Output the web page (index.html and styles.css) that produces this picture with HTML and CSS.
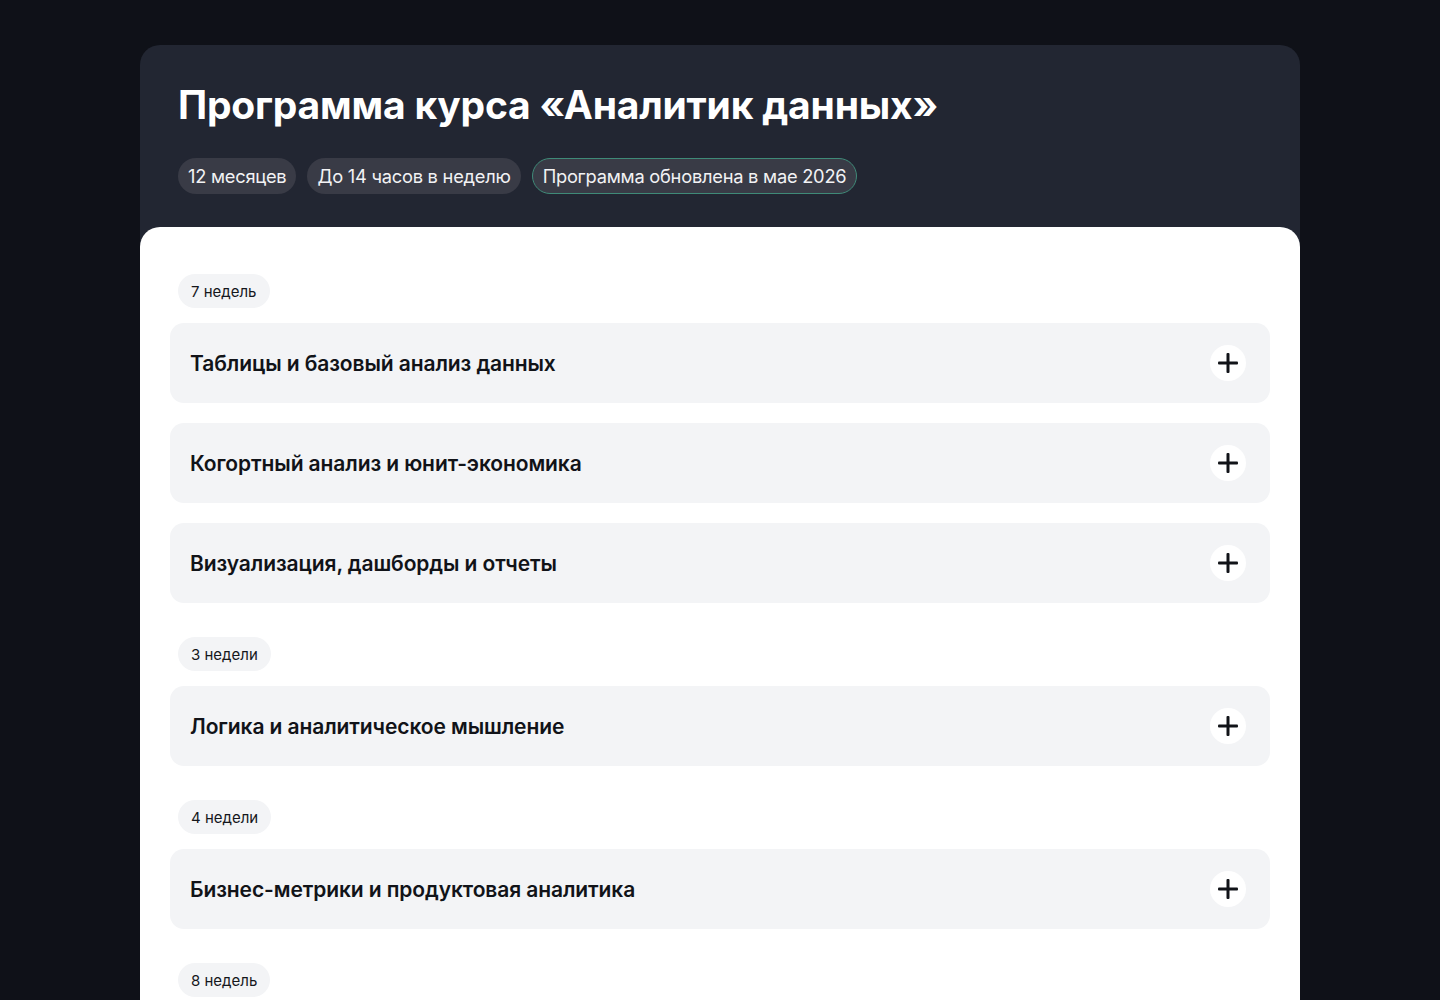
FILE: index.html
```html
<!DOCTYPE html>
<html lang="ru">
<head>
<meta charset="utf-8">
<link rel="stylesheet" href="styles.css">
</head>
<body>
<div class="card">
  <header class="head">
    <h1 class="title">Программа курса «Аналитик данных»</h1>
    <div class="tags">
      <span class="tag">12 месяцев</span>
      <span class="tag">До 14 часов в неделю</span>
      <span class="tag tag-new">Программа обновлена в мае 2026</span>
    </div>
  </header>
  <main class="panel">
    <section class="group">
      <span class="label">7 недель</span>
      <div class="item"><span class="item-title">Таблицы и базовый анализ данных</span><span class="plus"></span></div>
      <div class="item"><span class="item-title">Когортный анализ и юнит-экономика</span><span class="plus"></span></div>
      <div class="item"><span class="item-title">Визуализация, дашборды и отчеты</span><span class="plus"></span></div>
    </section>
    <section class="group">
      <span class="label">3 недели</span>
      <div class="item"><span class="item-title">Логика и аналитическое мышление</span><span class="plus"></span></div>
    </section>
    <section class="group">
      <span class="label">4 недели</span>
      <div class="item"><span class="item-title">Бизнес-метрики и продуктовая аналитика</span><span class="plus"></span></div>
    </section>
    <section class="group">
      <span class="label">8 недель</span>
    </section>
  </main>
</div>
</body>
</html>
```
FILE: styles.css
```css
* { box-sizing: border-box; }
html, body { margin: 0; padding: 0; }
body {
  background: #0f1118;
  font-family: Inter, "Noto Sans", sans-serif;
  padding-top: 45px;
  height: 1000px;
  overflow: hidden;
}
.card {
  width: 1160px;
  margin: 0 auto;
  background: #222632;
  border-radius: 20px 20px 0 0;
}
.head {
  padding: 36px 38px 33px;
}
.title {
  margin: 0;
  color: #ffffff;
  font-size: 39px;
  line-height: 48px;
  font-weight: 700;
  letter-spacing: -0.2px;
}
.tags {
  display: flex;
  gap: 11px;
  margin-top: 29px;
}
.tag {
  display: inline-flex;
  align-items: center;
  height: 36px;
  padding: 0 10px;
  border-radius: 18px;
  background: #393b46;
  color: #f2f2f4;
  font-size: 18.3px;
  letter-spacing: -0.25px;
}
.tag-new {
  border: 1px solid #3f8a78;
}
.panel {
  background: #ffffff;
  border-radius: 20px 20px 0 0;
  padding: 47px 30px 30px;
  display: flex;
  flex-direction: column;
  gap: 34px;
  min-height: 800px;
}
.group {
  display: flex;
  flex-direction: column;
  gap: 20px;
}
.label {
  align-self: flex-start;
  margin-left: 8px;
  margin-bottom: -5px;
  height: 34px;
  padding: 0 13px;
  border-radius: 17px;
  background: #f3f4f6;
  color: #15171c;
  font-size: 15px;
  display: inline-flex;
  align-items: center;
}
.item {
  height: 80px;
  background: #f3f4f6;
  border-radius: 14px;
  display: flex;
  align-items: center;
  justify-content: space-between;
  padding: 0 24px 0 20px;
}
.item-title {
  font-size: 21px;
  font-weight: 600;
  color: #111318;
  letter-spacing: -0.1px;
}
.plus {
  width: 36px;
  height: 36px;
  border-radius: 50%;
  background: #ffffff;
  position: relative;
}
.plus::before, .plus::after {
  content: "";
  position: absolute;
  left: 50%;
  top: 50%;
  background: #111318;
  border-radius: 1px;
}
.plus::before { width: 20px; height: 3px; transform: translate(-50%, -50%); }
.plus::after { width: 3px; height: 20px; transform: translate(-50%, -50%); }
```
